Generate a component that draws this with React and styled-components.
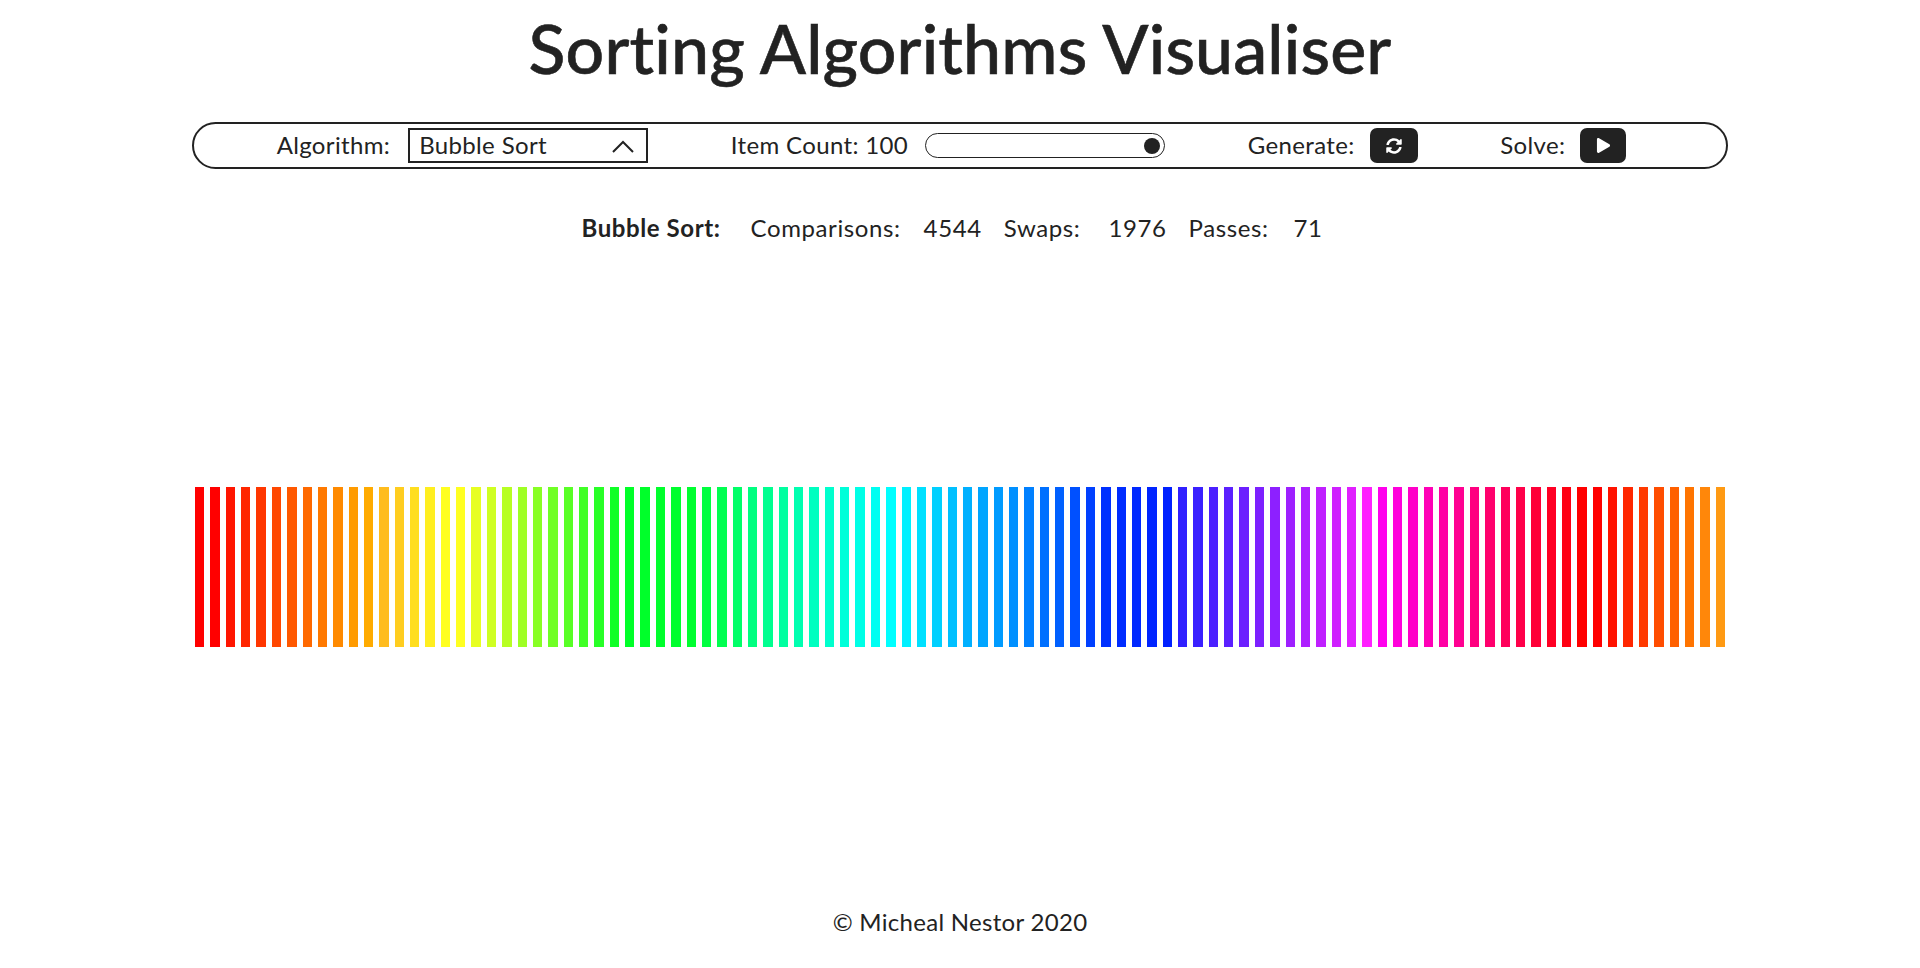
import React from "react";
import styled, { createGlobalStyle } from "styled-components";
import { FaSyncAlt, FaPlay } from "react-icons/fa";

const Global = createGlobalStyle`
  html, body { margin: 0; padding: 0; background: #fff; }
  body { font-family: "Lato", "Noto Sans", sans-serif; color: #222; }
`;

const Page = styled.div`
  height: 968px;
  width: 1920px;
  display: flex;
  flex-direction: column;
  align-items: center;
  overflow: hidden;
`;

const Title = styled.h1`
  margin: 0;
  height: 122px;
  padding-top: 8px;
  box-sizing: border-box;
  font-size: 68px;
  line-height: 80px;
  font-weight: 500;
  color: #222;
  letter-spacing: 0.15px;
  white-space: nowrap;
  -webkit-text-stroke: 0.6px #222;
`;

const Controls = styled.nav`
  box-sizing: border-box;
  width: 1536px;
  height: 47px;
  border: 2px solid #222;
  border-radius: 24px;
  padding: 0 17px 0 0;
  display: flex;
  align-items: center;
  justify-content: space-evenly;
  font-size: 24px;
  letter-spacing: 0.35px;
`;

const Group = styled.div`
  display: flex;
  align-items: center;
  gap: ${(p) => p.$gap || 15}px;
`;

const Label = styled.span`
  padding-bottom: 2px;
`;

const Select = styled.div`
  box-sizing: border-box;
  width: 240px;
  height: 35px;
  border: 2px solid #222;
  padding: 0 12px 0 9px;
  display: flex;
  align-items: center;
  justify-content: space-between;
`;

const Track = styled.div`
  box-sizing: border-box;
  width: 240px;
  height: 25px;
  border: 1px solid #222;
  border-radius: 13px;
  padding: 0 4px;
  display: flex;
  align-items: center;
  justify-content: flex-end;
`;

const Thumb = styled.div`
  width: 16px;
  height: 16px;
  border-radius: 50%;
  background: #222;
`;

const IconButton = styled.button`
  box-sizing: border-box;
  width: ${(p) => p.$w}px;
  height: 35px;
  border: none;
  border-radius: 7px;
  padding: 0;
  background: #222;
  color: #fff;
  display: flex;
  align-items: center;
  justify-content: center;
`;

const Stats = styled.div`
  display: flex;
  align-items: center;
  margin-top: 40px;
  height: 36px;
  font-size: 24px;
  letter-spacing: 0.6px;
  transform: translateX(-8px);
`;

const StatName = styled.strong`
  font-weight: 700;
  margin-right: 30px;
`;

const Stat = styled.span`
  margin-right: ${(p) => p.$mr}px;
`;

const Chart = styled.div`
  flex: 1;
  width: 1536px;
  display: flex;
  align-items: center;
  padding-bottom: 19px;
  box-sizing: border-box;
`;

const Bar = styled.div`
  flex: 1 1 0;
  height: 160px;
  margin: 0 3px;
`;

const Footer = styled.footer`
  height: 60px;
  font-size: 24px;
  letter-spacing: 0.3px;
  line-height: 28px;
  color: #222;
`;

const RED = [[0, 255], [17, 255], [27, 16], [28, 0], [63, 0], [64, 48], [65, 58], [75, 224], [76, 255], [99, 255]];
const GREEN = [[0, 0], [1, 0], [2, 21], [16, 255], [45, 255], [46, 240], [50, 176], [53, 144], [55, 112], [57, 80], [59, 48], [63, 32], [76, 32], [77, 0], [91, 0], [99, 154]];
const BLUE = [[0, 0], [11, 0], [12, 30], [28, 40], [32, 48], [34, 80], [36, 128], [40, 192], [45, 255], [76, 255], [90, 0], [97, 0], [99, 19]];

const sample = (stops, i) => {
  const k = stops.findIndex(([x]) => x >= i);
  if (k <= 0) return stops[0][1];
  const [x0, y0] = stops[k - 1];
  const [x1, y1] = stops[k];
  return Math.round(y0 + ((y1 - y0) * (i - x0)) / (x1 - x0));
};

const bars = Array.from({ length: 100 }, (_, i) => `rgb(${sample(RED, i)}, ${sample(GREEN, i)}, ${sample(BLUE, i)})`);

export default function App() {
  return (
    <Page>
      <Global />
      <Title>Sorting Algorithms Visualiser</Title>
      <Controls>
        <Group $gap={18}>
          <Label>Algorithm:</Label>
          <Select>
            <Label>Bubble Sort</Label>
            <svg width="22" height="14" viewBox="0 0 22 14" fill="none" stroke="#222" strokeWidth="2">
              <polyline points="1,13 11,3 21,13" />
            </svg>
          </Select>
        </Group>
        <Group $gap={17}>
          <Label>Item Count: 100</Label>
          <Track>
            <Thumb />
          </Track>
        </Group>
        <Group>
          <Label>Generate:</Label>
          <IconButton $w={48} aria-label="Generate">
            <FaSyncAlt size={16} />
          </IconButton>
        </Group>
        <Group>
          <Label>Solve:</Label>
          <IconButton $w={46} aria-label="Solve">
            <FaPlay size={15} />
          </IconButton>
        </Group>
      </Controls>
      <Stats>
        <StatName>Bubble Sort:</StatName>
        <Stat $mr={23}>Comparisons:</Stat>
        <Stat $mr={22}>4544</Stat>
        <Stat $mr={28}>Swaps:</Stat>
        <Stat $mr={22}>1976</Stat>
        <Stat $mr={25}>Passes:</Stat>
        <Stat $mr={0}>71</Stat>
      </Stats>
      <Chart>
        {bars.map((color, i) => (
          <Bar key={i} style={{ background: color }} />
        ))}
      </Chart>
      <Footer>© Micheal Nestor 2020</Footer>
    </Page>
  );
}
